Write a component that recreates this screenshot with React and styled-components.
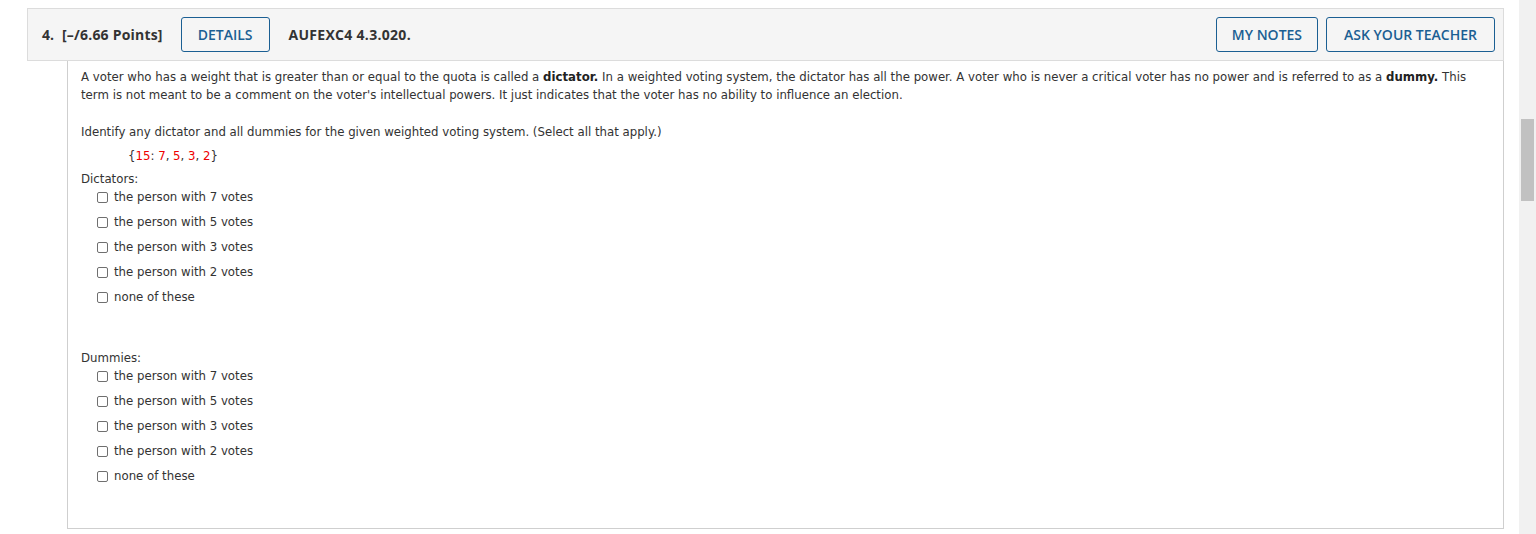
import styled, { createGlobalStyle } from "styled-components";

const GlobalStyle = createGlobalStyle`
  html, body {
    margin: 0;
    padding: 0;
    background: #fff;
    overflow: hidden;
  }
`;

const Page = styled.div`
  display: flex;
  height: 534px;
`;

const Main = styled.div`
  flex: 1;
  padding: 8px 15px 0 27px;
`;

const Scrollbar = styled.div`
  width: 17px;
  background: #f1f1f1;
  display: flex;
  flex-direction: column;
  align-items: center;
`;

const Thumb = styled.div`
  width: 13px;
  height: 82px;
  margin-top: 119px;
  background: #c1c1c1;
`;

const Header = styled.div`
  display: flex;
  align-items: center;
  height: 51px;
  padding: 0 8px 0 14px;
  background: #f5f5f5;
  border: 1px solid #dcdcdc;
  font-family: "Open Sans", "Liberation Sans", sans-serif;
  font-size: 14px;
  font-weight: 700;
  color: #333;
`;

const Number = styled.span`
  margin-right: 8px;
`;

const Points = styled.span`
  margin-right: 18px;
  letter-spacing: 0.2px;
`;

const Code = styled.span`
  margin-left: 19px;
  letter-spacing: 0.3px;
`;

const Spacer = styled.div`
  flex: 1;
`;

const Button = styled.button`
  height: 35px;
  padding: 0 ${(p) => p.$pad || 15}px;
  margin-left: ${(p) => p.$gap || 0}px;
  border: 1px solid #1b5f93;
  border-radius: 3px;
  background: transparent;
  color: #1b5f93;
  font-family: "Open Sans", "Liberation Sans", sans-serif;
  font-size: 14px;
  font-weight: 600;
  cursor: pointer;
`;

const Body = styled.div`
  margin-left: 40px;
  height: 468px;
  box-sizing: border-box;
  border: 1px solid #cfcfcf;
  border-top: none;
  padding: 7px 13px 0 13px;
  font-family: "DejaVu Sans", Verdana, sans-serif;
  font-size: 11.75px;
  line-height: 18px;
  color: #333;
`;

const Para = styled.p`
  margin: 0;
  margin-top: ${(p) => p.$top || 0}px;
`;

const Strong = styled.b`
  color: #222;
`;

const Formula = styled.div`
  margin: 6px 0 0 47px;
  color: #333;
`;

const Red = styled.span`
  color: #ee0000;
`;

const GroupLabel = styled.div`
  margin-top: ${(p) => p.$top}px;
`;

const OptionList = styled.div`
  display: flex;
  flex-direction: column;
  gap: 7px;
  padding-left: 16px;
`;

const Option = styled.label`
  display: flex;
  align-items: center;
  gap: 6px;
  height: 18px;
`;

const Box = styled.input.attrs({ type: "checkbox" })`
  appearance: none;
  width: 11px;
  height: 11px;
  margin: 0;
  border: 1px solid #6f6f6f;
  border-radius: 2px;
  background: #fff;
  box-sizing: border-box;
`;

const options = [
  "the person with 7 votes",
  "the person with 5 votes",
  "the person with 3 votes",
  "the person with 2 votes",
  "none of these",
];

function Group({ label, top }) {
  return (
    <>
      <GroupLabel $top={top}>{label}</GroupLabel>
      <OptionList>
        {options.map((o) => (
          <Option key={o}>
            <Box />
            {o}
          </Option>
        ))}
      </OptionList>
    </>
  );
}

export default function App() {
  return (
    <>
      <GlobalStyle />
      <Page>
        <Main>
          <Header>
            <Number>4.</Number>
            <Points>[–/6.66 Points]</Points>
            <Button $pad={16}>DETAILS</Button>
            <Code>AUFEXC4 4.3.020.</Code>
            <Spacer />
            <Button $pad={15}>MY NOTES</Button>
            <Button $pad={17} $gap={8}>ASK YOUR TEACHER</Button>
          </Header>
          <Body>
            <Para>
              A voter who has a weight that is greater than or equal to the quota is called a{" "}
              <Strong>dictator.</Strong> In a weighted voting system, the dictator has all the power. A
              voter who is never a critical voter has no power and is referred to as a{" "}
              <Strong>dummy.</Strong> This term is not meant to be a comment on the voter's intellectual
              powers. It just indicates that the voter has no ability to influence an election.
            </Para>
            <Para $top={19}>
              Identify any dictator and all dummies for the given weighted voting system. (Select all
              that apply.)
            </Para>
            <Formula>
              {"{"}
              <Red>15</Red>: <Red>7</Red>, <Red>5</Red>, <Red>3</Red>, <Red>2</Red>
              {"}"}
            </Formula>
            <Group label="Dictators:" top={5} />
            <Group label="Dummies:" top={43} />
          </Body>
        </Main>
        <Scrollbar>
          <Thumb />
        </Scrollbar>
      </Page>
    </>
  );
}
